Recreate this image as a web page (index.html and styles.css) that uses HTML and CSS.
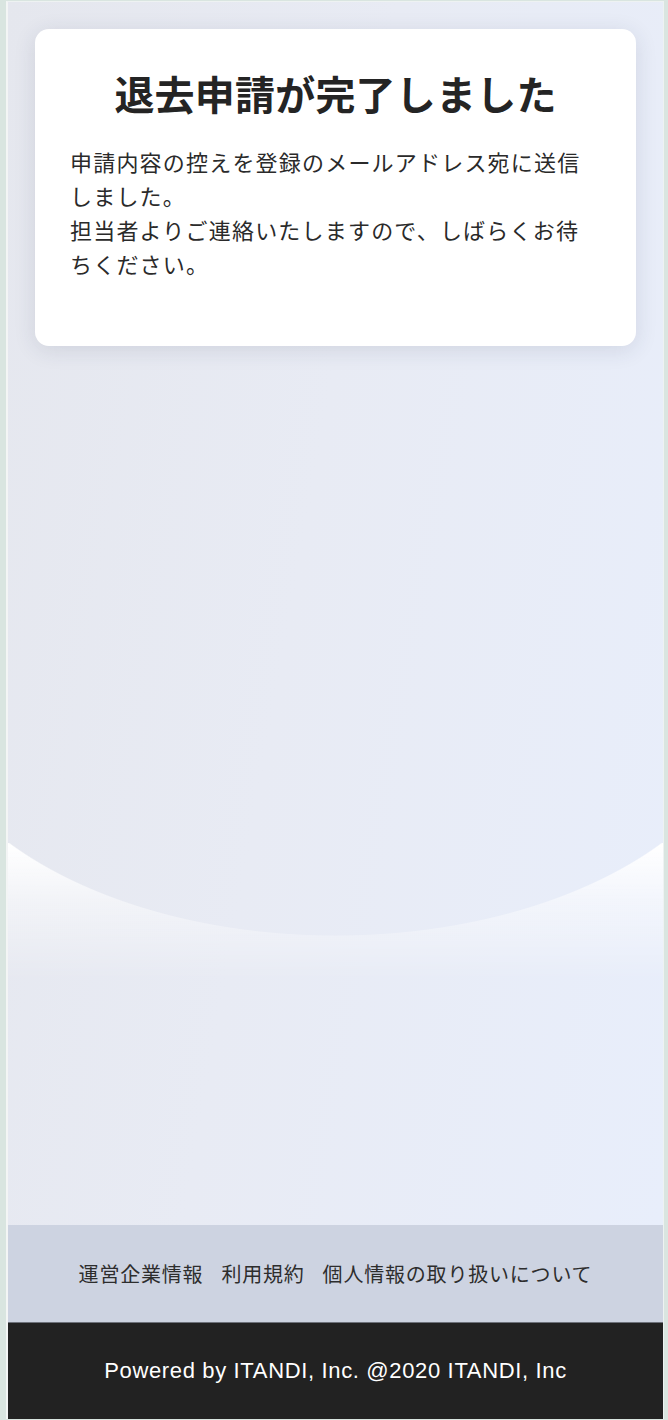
FILE: index.html
```html
<!DOCTYPE html>
<html lang="ja">
<head>
    <meta charset="UTF-8">
    <meta name="viewport" content="width=device-width, initial-scale=1.0">
    <title>退去申請完了</title>
    <link rel="stylesheet" href="styles.css">
</head>
<body>
    <div class="frame">
        <main class="main">
            <div class="card">
                <h1 class="card-title">退去申請が完了しました</h1>
                <p class="card-text">申請内容の控えを登録のメールアドレス宛に送信しました。<br>担当者よりご連絡いたしますので、しばらくお待ちください。</p>
            </div>
        </main>
        <nav class="links">
            <a href="#">運営企業情報</a>
            <a href="#">利用規約</a>
            <a href="#">個人情報の取り扱いについて</a>
        </nav>
        <footer class="footer">Powered by ITANDI, Inc. @2020 ITANDI, Inc</footer>
    </div>
</body>
</html>
```

FILE: styles.css
```css
body { margin: 0; background: #d9e5e0; font-family: "Noto Sans CJK JP", "Noto Sans", sans-serif; color: #2a2a2a; }
.frame { margin: 1px 4px 0 6px; border-top: 1px solid #eef2f2; border-left: 2px solid #f3f5f5; border-right: 1px solid #eef2f2; display: flex; flex-direction: column; }

.main {
    position: relative;
    height: 1223px;
    padding: 27px 27px 0;
    box-sizing: border-box;
    background: linear-gradient(100deg, #e5e7ee 0%, #e8ebf4 45%, #e8eefb 100%);
}
.main::before {
    content: "";
    position: absolute;
    left: 0;
    right: 0;
    top: 841px;
    height: 140px;
    background: linear-gradient(to bottom, #ffffff 0px, rgba(255,255,255,0.5) 55px, rgba(255,255,255,0) 140px);
    -webkit-mask-image: radial-gradient(420px 249px at 50% -156px, transparent 99.6%, #000 100%);
    mask-image: radial-gradient(420px 249px at 50% -156px, transparent 99.6%, #000 100%);
}

.card {
    position: relative;
    z-index: 1;
    background: #fff;
    border-radius: 14px;
    padding: 34px 35px 34px;
    box-shadow: 0 4px 22px rgba(40, 50, 80, 0.12);
}
.card-title { margin: 0; font-size: 40px; line-height: 60px; font-weight: 700; text-align: center; color: #242424; letter-spacing: 0.2px; }
.card-text { margin: 21px 0 32px; font-size: 22px; line-height: 34px; letter-spacing: 1.2px; color: #2a2a2a; }

.links {
    height: 97px;
    background: #cdd3e1;
    border-bottom: 1px solid #6e727b;
    display: flex;
    justify-content: center;
    align-items: center;
    gap: 18px;
}
.links a { color: #2d2d2d; text-decoration: none; font-size: 20px; letter-spacing: 0.8px; }

.footer {
    height: 96px;
    background: #222222;
    color: #fff;
    display: flex;
    justify-content: center;
    align-items: center;
    font-family: "Liberation Sans", Arial, sans-serif;
    font-size: 22px;
    letter-spacing: 0.65px;
}
```
